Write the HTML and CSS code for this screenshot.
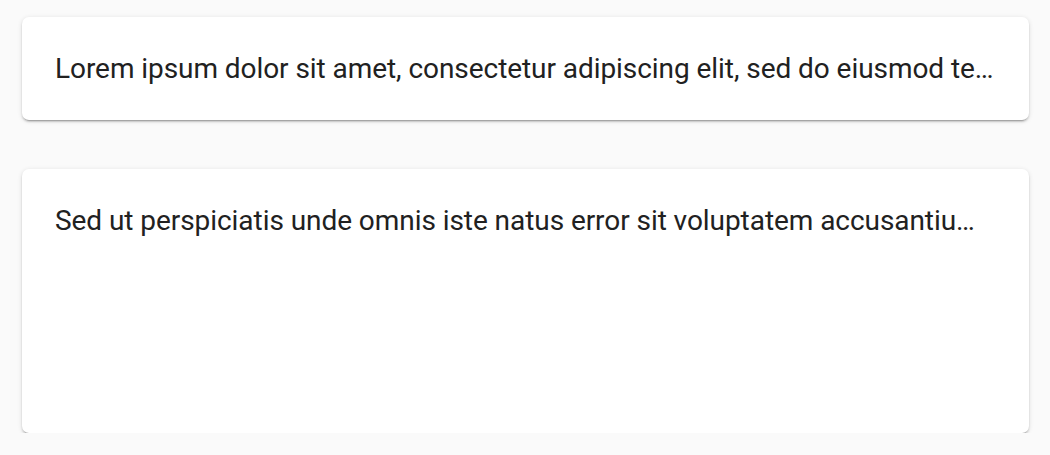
FILE: index.html
```html
<!DOCTYPE html>
<html>
<head>
<meta charset="utf-8">
<link rel="stylesheet" href="styles.css">
</head>
<body>
<div class="list">
  <div class="card">
    <p class="text">Lorem ipsum dolor sit amet, consectetur adipiscing elit, sed do eiusmod tempor incididunt ut labore et dolore magna aliqua.</p>
  </div>
  <div class="card tall">
    <p class="text">Sed ut perspiciatis unde omnis iste natus error sit voluptatem accusantium doloremque laudantium, totam rem aperiam.</p>
  </div>
</div>
</body>
</html>
```
FILE: styles.css
```css
html, body {
  margin: 0;
  padding: 0;
  background: #fafafa;
}
body {
  font-family: Roboto, "Liberation Sans", sans-serif;
}
.list {
  display: flex;
  flex-direction: column;
  gap: 49px;
  padding: 17px 21px 0 22px;
}
.card {
  background: #fff;
  border-radius: 7px;
  box-shadow: 0 3px 1px -2px rgba(0,0,0,0.2), 0 2px 2px 0 rgba(0,0,0,0.14), 0 1px 5px 0 rgba(0,0,0,0.12);
  padding: 33px 33px;
  height: 37px;
}
.card.tall {
  height: 198px;
}
.text {
  margin: 0;
  font-size: 28px;
  line-height: 37px;
  letter-spacing: -0.06px;
  color: #212121;
  white-space: nowrap;
  overflow: hidden;
  text-overflow: ellipsis;
}
```
